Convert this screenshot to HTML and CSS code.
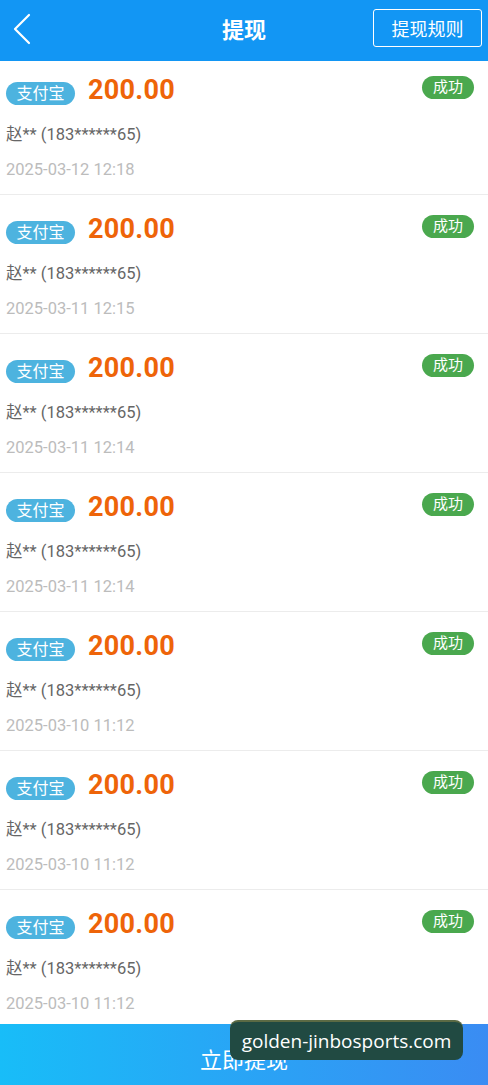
FILE: index.html
```html
<!DOCTYPE html>
<html lang="zh-CN">
<head>
    <meta charset="UTF-8">
    <title>提现</title>
    <meta name="viewport" content="width=device-width, initial-scale=1.0">
    <link rel="stylesheet" href="styles.css">
</head>
<body>
    <div class="page">
        <div class="header">
            <div class="back">
                <svg width="20" height="32" viewBox="0 0 20 32"><path d="M17 2 L3 16 L17 30" fill="none" stroke="#fff" stroke-width="2.2" stroke-linecap="round" stroke-linejoin="round"/></svg>
            </div>
            <div class="title">提现</div>
            <div class="rules">提现规则</div>
        </div>

        <div class="list">
            <div class="item">
                <div class="row">
                    <span class="channel">支付宝</span>
                    <span class="amount">200.00</span>
                    <span class="status">成功</span>
                </div>
                <div class="account">赵** (183******65)</div>
                <div class="time">2025-03-12 12:18</div>
            </div>
            <div class="item">
                <div class="row">
                    <span class="channel">支付宝</span>
                    <span class="amount">200.00</span>
                    <span class="status">成功</span>
                </div>
                <div class="account">赵** (183******65)</div>
                <div class="time">2025-03-11 12:15</div>
            </div>
            <div class="item">
                <div class="row">
                    <span class="channel">支付宝</span>
                    <span class="amount">200.00</span>
                    <span class="status">成功</span>
                </div>
                <div class="account">赵** (183******65)</div>
                <div class="time">2025-03-11 12:14</div>
            </div>
            <div class="item">
                <div class="row">
                    <span class="channel">支付宝</span>
                    <span class="amount">200.00</span>
                    <span class="status">成功</span>
                </div>
                <div class="account">赵** (183******65)</div>
                <div class="time">2025-03-11 12:14</div>
            </div>
            <div class="item">
                <div class="row">
                    <span class="channel">支付宝</span>
                    <span class="amount">200.00</span>
                    <span class="status">成功</span>
                </div>
                <div class="account">赵** (183******65)</div>
                <div class="time">2025-03-10 11:12</div>
            </div>
            <div class="item">
                <div class="row">
                    <span class="channel">支付宝</span>
                    <span class="amount">200.00</span>
                    <span class="status">成功</span>
                </div>
                <div class="account">赵** (183******65)</div>
                <div class="time">2025-03-10 11:12</div>
            </div>
            <div class="item">
                <div class="row">
                    <span class="channel">支付宝</span>
                    <span class="amount">200.00</span>
                    <span class="status">成功</span>
                </div>
                <div class="account">赵** (183******65)</div>
                <div class="time">2025-03-10 11:12</div>
            </div>
        </div>

        <div class="submit">立即提现</div>
        <div class="watermark">golden-jinbosports.com</div>
    </div>
</body>
</html>
```

FILE: styles.css
```css
body {
    margin: 0;
    font-family: Roboto, "Noto Sans CJK SC", sans-serif;
    background-color: #fff;
}
.page {
    position: relative;
    width: 488px;
    height: 1085px;
    overflow: hidden;
    display: flex;
    flex-direction: column;
}
.header {
    height: 61px;
    background-color: #1296f4;
    display: flex;
    align-items: center;
    justify-content: space-between;
    padding: 0 6px 0 12px;
    box-sizing: border-box;
    position: relative;
    flex-shrink: 0;
}
.back {
    width: 20px;
    height: 32px;
    margin-top: -3px;
}
.title {
    position: absolute;
    left: 0;
    right: 0;
    text-align: center;
    color: #fff;
    font-size: 22px;
    font-weight: bold;
    pointer-events: none;
    margin-top: -5px;
}
.rules {
    border: 1.5px solid #fff;
    border-radius: 3px;
    color: #fff;
    font-size: 18px;
    width: 109px;
    height: 38px;
    box-sizing: border-box;
    display: flex;
    align-items: center;
    justify-content: center;
    margin-top: -5px;
}
.list {
    flex: 1;
    overflow: hidden;
}
.item {
    height: 139px;
    padding: 26px 14px 0 6px;
    box-sizing: border-box;
    border-bottom: 1.5px solid #ececec;
}
.item:first-child {
    height: 134px;
    padding-top: 21px;
}
.row {
    display: flex;
    align-items: center;
    height: 23px;
}
.channel {
    background-color: #4db3df;
    color: #fff;
    font-size: 16px;
    border-radius: 12px;
    width: 69px;
    height: 23px;
    line-height: 23px;
    text-align: center;
}
.amount {
    color: #ee6409;
    font-size: 27px;
    font-weight: bold;
    margin-left: 13px;
    margin-top: -7px;
    letter-spacing: 0.3px;
}
.status {
    margin-left: auto;
    background-color: #4aa84e;
    color: #fff;
    font-size: 15px;
    border-radius: 12px;
    width: 52px;
    height: 23px;
    line-height: 23px;
    text-align: center;
    margin-top: -12px;
}
.account {
    margin-top: 16px;
    color: #666;
    font-size: 16.5px;
}
.time {
    margin-top: 15px;
    color: #bcbcbc;
    font-size: 16.5px;
}
.submit {
    height: 61px;
    flex-shrink: 0;
    background: linear-gradient(90deg, #18bdf8, #3a8cf3);
    color: #fff;
    font-size: 22px;
    display: flex;
    align-items: center;
    justify-content: center;
    padding-top: 6px;
    box-sizing: border-box;
}
.watermark {
    position: absolute;
    left: 230px;
    top: 1020px;
    width: 233px;
    height: 40px;
    background-color: #214a42;
    border-top: 2px solid #5b6a44;
    box-sizing: border-box;
    border-radius: 8px;
    color: #fff;
    font-family: "Open Sans", "Noto Sans", sans-serif;
    font-size: 19px;
    display: flex;
    align-items: center;
    justify-content: center;
}
```
